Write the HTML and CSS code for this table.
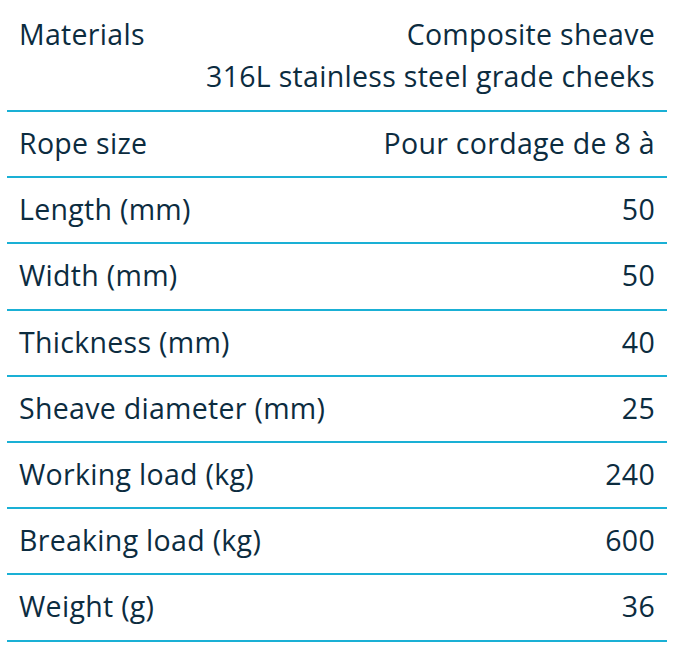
FILE: index.html
```html
<!DOCTYPE html>
<html>
<head>
<meta charset="utf-8">
<link rel="stylesheet" href="styles.css">
</head>
<body>
<div class="specs">
<div class="row first"><span class="label">Materials</span><span class="value">Composite sheave<br>316L stainless steel grade cheeks</span></div>
<div class="row"><span class="label">Rope size</span><span class="value">Pour cordage de 8 à</span></div>
<div class="row"><span class="label">Length (mm)</span><span class="value">50</span></div>
<div class="row"><span class="label">Width (mm)</span><span class="value">50</span></div>
<div class="row"><span class="label">Thickness (mm)</span><span class="value">40</span></div>
<div class="row"><span class="label">Sheave diameter (mm)</span><span class="value">25</span></div>
<div class="row"><span class="label">Working load (kg)</span><span class="value">240</span></div>
<div class="row"><span class="label">Breaking load (kg)</span><span class="value">600</span></div>
<div class="row"><span class="label">Weight (g)</span><span class="value">36</span></div>
</div>
</body>
</html>
```

FILE: styles.css
```css
html, body {
  margin: 0;
  padding: 0;
  background: #ffffff;
}
.specs {
  margin-left: 7px;
  width: 660px;
  display: flex;
  flex-direction: column;
  font-family: "Open Sans", sans-serif;
  font-size: 28.5px;
  letter-spacing: 0.3px;
  color: #0c2c3f;
}
.row {
  display: flex;
  justify-content: space-between;
  align-items: flex-start;
  padding: 11px 12px 13px;
  line-height: 40.2px;
  border-bottom: 2px solid #1ab0d5;
}
.label {
  text-align: left;
  white-space: nowrap;
}
.value {
  text-align: right;
  white-space: nowrap;
}
.row.first {
  padding-top: 13px;
  padding-bottom: 13px;
  line-height: 42px;
}
```
